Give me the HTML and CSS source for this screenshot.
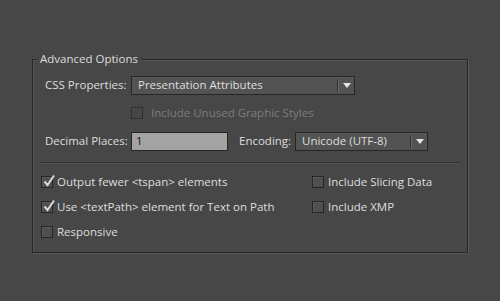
FILE: index.html
```html
<!DOCTYPE html>
<html>
<head>
<meta charset="utf-8">
<link rel="stylesheet" href="styles.css">
</head>
<body>
<div class="page">
  <fieldset class="group">
    <legend class="group-title">Advanced Options</legend>

    <div class="row row-css">
      <span class="label">CSS Properties:</span>
      <div class="select sel-css">
        <span class="val">Presentation Attributes</span>
        <span class="sep"></span>
        <span class="arrow"></span>
      </div>
    </div>

    <div class="row row-unused">
      <span class="cb cb-disabled"></span>
      <span class="dis-text">Include Unused Graphic Styles</span>
    </div>

    <div class="row row-dec">
      <span class="label">Decimal Places:</span>
      <div class="input">1</div>
      <span class="label label-enc">Encoding:</span>
      <div class="select sel-enc">
        <span class="val">Unicode (UTF-8)</span>
        <span class="sep"></span>
        <span class="arrow"></span>
      </div>
    </div>

    <div class="divider"></div>

    <div class="checks">
      <div class="check"><span class="cb"><svg class="tick" viewBox="0 0 14 14" width="14" height="14"><path d="M2.5 7.5 L5.5 11 L12 1.5" fill="none" stroke="#d9d9d9" stroke-width="2"/></svg></span><span class="txt">Output fewer &lt;tspan&gt; elements</span></div>
      <div class="check"><span class="cb"></span><span class="txt">Include Slicing Data</span></div>
      <div class="check"><span class="cb"><svg class="tick" viewBox="0 0 14 14" width="14" height="14"><path d="M2.5 7.5 L5.5 11 L12 1.5" fill="none" stroke="#d9d9d9" stroke-width="2"/></svg></span><span class="txt">Use &lt;textPath&gt; element for Text on Path</span></div>
      <div class="check"><span class="cb"></span><span class="txt">Include XMP</span></div>
      <div class="check"><span class="cb"></span><span class="txt">Responsive</span></div>
    </div>
  </fieldset>
</div>
</body>
</html>
```
FILE: styles.css
```css
html, body {
  margin: 0;
  padding: 0;
  background: #474747;
}
body {
  font-family: "Open Sans", "Liberation Sans", Arial, sans-serif;
  font-size: 11.5px;
  color: #dedede;
  width: 500px;
  height: 301px;
  overflow: hidden;
}
.page {
  padding: 52px 0 0 32px;
}
.group {
  box-sizing: border-box;
  width: 436px;
  margin: 0;
  padding: 10px 12px 12px 12px;
  border: 1px solid #262626;
  box-shadow: 1px 1px 0 #585858, inset 1px 1px 0 #585858;
  min-width: 0;
}
.group-title {
  margin-left: -8px;
  padding: 0 3px;
  line-height: 14px;
  background: #474747;
}
.row {
  display: flex;
  align-items: center;
}
.label {
  width: 86px;
  flex: none;
  white-space: nowrap;
  padding-bottom: 2px;
}
.select {
  box-sizing: border-box;
  height: 19px;
  display: flex;
  align-items: center;
  border: 1px solid #262626;
  background: #535353;
  box-shadow: inset 0 1px 0 #5c5c5c;
}
.sel-css { width: 224px; }
.sel-enc { width: 133px; }
.val {
  flex: 1;
  padding-left: 6px;
  padding-bottom: 2px;
  white-space: nowrap;
}
.sep {
  width: 1px;
  height: 13px;
  background: #2f2f2f;
  border-right: 1px solid #6a6a6a;
}
.arrow {
  width: 15px;
  height: 17px;
  display: flex;
  align-items: center;
  justify-content: center;
}
.arrow::before {
  content: "";
  width: 0;
  height: 0;
  border-left: 4px solid transparent;
  border-right: 4px solid transparent;
  border-top: 5px solid #e6e6e6;
}
.row-unused {
  height: 14px;
  margin-top: 11px;
  padding-left: 86px;
}
.dis-text {
  color: #7d7d7d;
  margin-left: 4px;
  padding-bottom: 2px;
}
.row-dec {
  margin-top: 12px;
}
.input {
  box-sizing: border-box;
  width: 97px;
  height: 19px;
  border: 1px solid #262626;
  background: #a3a3a3;
  color: #1a0a1a;
  padding-left: 4px;
  line-height: 16px;
}
.label-enc {
  width: 56px;
  margin-left: 11px;
}
.divider {
  margin: 11px -5px 0 -5px;
  height: 1px;
  background: #333333;
  border-bottom: 1px solid #545454;
}
.checks {
  margin: 10px 0 0 -4px;
  display: grid;
  grid-template-columns: 271px auto;
  grid-auto-rows: 16px;
  row-gap: 9px;
}
.check {
  display: flex;
  align-items: center;
  white-space: nowrap;
}
.txt {
  padding-bottom: 2px;
}
.cb {
  position: relative;
  box-sizing: border-box;
  flex: none;
  width: 12px;
  height: 12px;
  border: 1px solid #262626;
  background: #4f4f4f;
  box-shadow: inset 1px 1px 0 #5a5a5a;
  margin-right: 4px;
}
.cb-disabled {
  border-color: #303030;
  background: #474747;
  box-shadow: none;
}
.tick {
  position: absolute;
  left: 0px;
  top: -3px;
  overflow: visible;
}
```
